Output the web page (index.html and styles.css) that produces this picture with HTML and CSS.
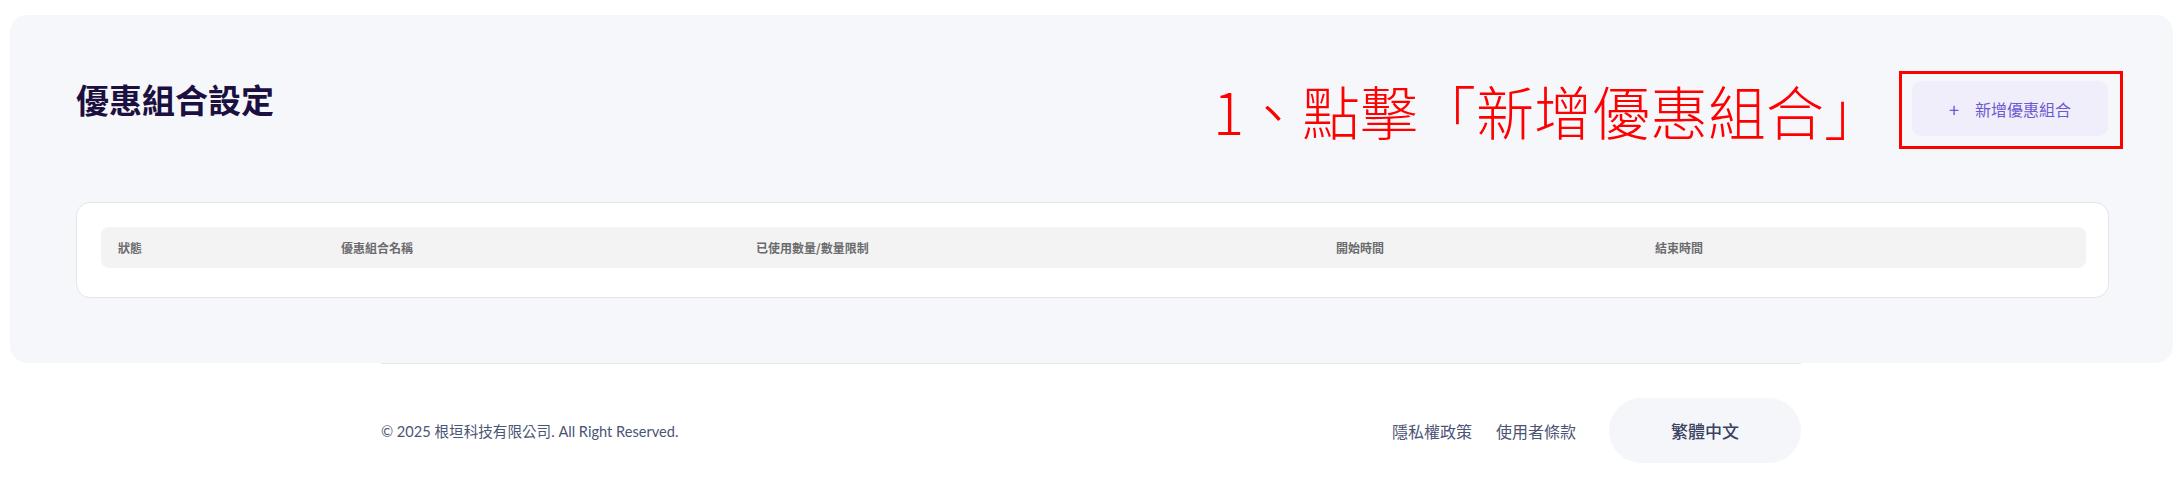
FILE: index.html
```html
<!DOCTYPE html>
<html>
	<head>
		<meta charset="UTF-8">
		<title>優惠組合設定</title>
		<link rel="stylesheet" href="styles.css">
	</head>
	<body>
		<div class="panel">
			<div class="panel-head">
				<h1 class="title">優惠組合設定</h1>
				<div class="actions">
					<span class="note">1、點擊「新增優惠組合」</span>
					<div class="mark">
						<button class="btn-add"><span class="plus">+</span>新增優惠組合</button>
					</div>
				</div>
			</div>
			<div class="card">
				<div class="thead">
					<span>狀態</span>
					<span>優惠組合名稱</span>
					<span>已使用數量/數量限制</span>
					<span>開始時間</span>
					<span>結束時間</span>
				</div>
			</div>
		</div>
		<div class="footer">
			<span class="copy">© 2025 根垣科技有限公司. All Right Reserved.</span>
			<div class="links">
				<a href="#">隱私權政策</a>
				<a href="#">使用者條款</a>
				<span class="lang">繁體中文</span>
			</div>
		</div>
	</body>
</html>
```

FILE: styles.css
```css
*{
	margin: 0;
	padding: 0;
	box-sizing: border-box;
}
body{
	background: #fff;
	font-family: "Noto Sans CJK TC", "Noto Sans", sans-serif;
}
.panel{
	margin: 15px 9px 0 10px;
	padding: 56px 64px 65px 66px;
	background: #f6f7fb;
	border-radius: 17px;
}
.panel-head{
	display: flex;
	justify-content: space-between;
	align-items: flex-start;
}
.title{
	margin-top: 8px;
	font-size: 33px;
	line-height: 40px;
	font-weight: 700;
	color: #1b1040;
}
.actions{
	display: flex;
	align-items: center;
	margin-right: -14px;
}
.note{
	font-family: "Noto Sans CJK TC", sans-serif;
	font-size: 58px;
	line-height: 64px;
	font-weight: 300;
	color: #ff0000;
	margin-right: 17px;
}
.mark{
	border: 3px solid #ff0000;
	padding: 7px 12px 10px 10px;
}
.btn-add{
	display: flex;
	align-items: center;
	justify-content: center;
	width: 196px;
	height: 55px;
	border: none;
	border-radius: 9px;
	background: #f1eefc;
	color: #6a5bd0;
	font-family: "Noto Sans CJK TC", sans-serif;
	font-size: 16px;
}
.plus{
	font-size: 18px;
	margin-right: 16px;
}
.card{
	margin-top: 53px;
	background: #fff;
	border: 1px solid #e4e5ea;
	border-radius: 14px;
	padding: 24px 22px 29px 24px;
}
.thead{
	display: grid;
	grid-template-columns: 223px 415px 580px 319px 1fr;
	align-items: center;
	height: 41px;
	padding: 0 17px;
	background: #f3f3f3;
	border-radius: 8px;
	font-size: 12px;
	font-weight: 700;
	color: #6b6b6e;
}
.footer{
	display: flex;
	justify-content: space-between;
	align-items: center;
	width: 1420px;
	margin: 0 auto;
	padding-top: 34px;
	border-top: 1px solid #e7e8ec;
}
.copy{
	font-family: Lato, "Noto Sans CJK TC", sans-serif;
	font-size: 14.6px;
	color: #4b5475;
}
.links{
	display: flex;
	align-items: center;
}
.links a{
	font-size: 16px;
	color: #4b5475;
	text-decoration: none;
	margin-right: 24px;
}
.links a + a{
	margin-right: 33px;
}
.lang{
	display: inline-block;
	width: 192px;
	height: 65px;
	line-height: 65px;
	text-align: center;
	border-radius: 33px;
	background: #f5f6fa;
	font-size: 17px;
	font-weight: 500;
	color: #3a4260;
}
```
